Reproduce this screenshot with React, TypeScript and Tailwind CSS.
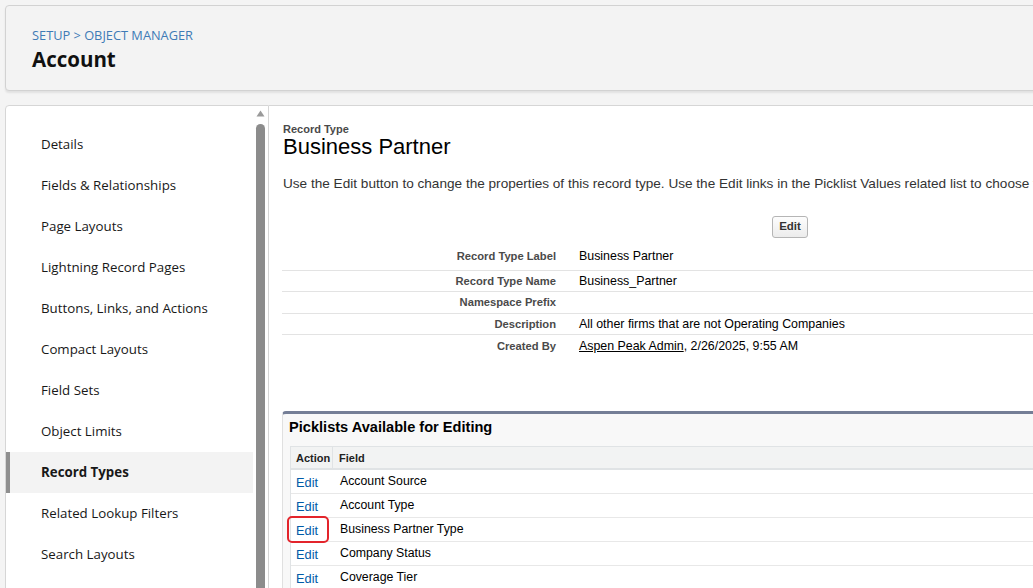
import React from "react";

const navItems = [
  "Details",
  "Fields & Relationships",
  "Page Layouts",
  "Lightning Record Pages",
  "Buttons, Links, and Actions",
  "Compact Layouts",
  "Field Sets",
  "Object Limits",
  "Record Types",
  "Related Lookup Filters",
  "Search Layouts",
  "List View Button Layout",
];

const details: { label: string; value: React.ReactNode; h: string }[] = [
  { label: "Record Type Label", value: "Business Partner", h: "h-[25px] pb-[4px]" },
  { label: "Record Type Name", value: "Business_Partner", h: "h-[21px]" },
  { label: "Namespace Prefix", value: "", h: "h-[22px]" },
  { label: "Description", value: "All other firms that are not Operating Companies", h: "h-[21px]" },
  {
    label: "Created By",
    value: (
      <>
        <span className="underline">Aspen Peak Admin</span>, 2/26/2025, 9:55 AM
      </>
    ),
    h: "h-[22px]",
  },
];

const picklists = ["Account Source", "Account Type", "Business Partner Type", "Company Status", "Coverage Tier"];

export default function App() {
  return (
    <div className="w-[1033px] h-[588px] overflow-hidden bg-[#f4f4f4] pt-[5px] pl-[5px]">
      {/* Header */}
      <div
        className="w-[1100px] h-[86px] bg-[#f3f3f3] border border-[#d2d2d2] rounded-[4px] shadow-[0_2px_2px_rgba(0,0,0,0.08)] pl-[26px] pt-[20px]"
        style={{ fontFamily: '"Open Sans", "Noto Sans", sans-serif' }}
      >
        <div className="text-[12.8px] leading-[18px] text-[#3e7bb6]">SETUP &gt; OBJECT MANAGER</div>
        <div className="mt-[1px] text-[20.5px] leading-[28px] font-bold text-[#101010]">Account</div>
      </div>

      {/* Body */}
      <div className="mt-[14px] flex h-[600px] w-[1100px]">
        {/* Left nav panel */}
        <div className="w-[264px] shrink-0 bg-white border border-[#d6d6d6] rounded-tl-[4px] flex">
          <div
            className="w-[247px] pt-[18px]"
            style={{ fontFamily: '"Open Sans", "Noto Sans", sans-serif' }}
          >
            {navItems.map((item) => {
              const sel = item === "Record Types";
              return (
                <div
                  key={item}
                  className={
                    sel
                      ? "h-[41px] flex items-center bg-[#f3f3f3] border-l-[4px] border-[#8f8f8f] pl-[31px] text-[13.3px] font-bold text-[#181818]"
                      : "h-[41px] flex items-center pl-[35px] text-[13.3px] text-[#181818]"
                  }
                >
                  {item}
                </div>
              );
            })}
          </div>
          <div className="ml-[3px] w-[9px] flex flex-col items-center">
            <svg width="9" height="7" viewBox="0 0 9 7" className="mt-[4px]">
              <path d="M4.5 0.5 L8.5 6.5 L0.5 6.5 Z" fill="#9a9a9a" />
            </svg>
            <div className="mt-[7px] w-[9px] flex-1 bg-[#8c8c8c] rounded-t-full" />
          </div>
        </div>

        {/* Right content */}
        <div
          className="flex-1 min-w-0 bg-white border-t border-[#d6d6d6] pl-[13px]"
          style={{ fontFamily: '"Liberation Sans", Arial, sans-serif' }}
        >
          <div className="pl-[1px] pt-[17px] text-[11px] leading-[12px] font-bold text-[#4a4a4a]">Record Type</div>
          <div className="pl-[1px] text-[22px] leading-[24px] text-black">Business Partner</div>
          <div className="pl-[1px] mt-[16px] text-[13.6px] leading-[18px] text-[#333] whitespace-nowrap">
            Use the Edit button to change the properties of this record type. Use the Edit links in the Picklist Values related list to choose the values available for this record type.
          </div>
          <div className="mt-[23px] pl-[490px] h-[21px]">
            <button className="h-[22px] w-[36px] text-[11.5px] font-bold text-[#333] bg-gradient-to-b from-[#fdfdfd] to-[#ececec] border border-[#b5b5b5] rounded-[3px] flex items-center justify-center">
              Edit
            </button>
          </div>

          <div className="mt-[9px]">
            {details.map((d, i) => (
              <div
                key={d.label}
                className={`flex items-center ${d.h} ${i < details.length - 1 ? "border-b border-[#e3e3e3]" : ""}`}
              >
                <div className="w-[274px] shrink-0 text-right text-[11.2px] font-bold text-[#4a4a4a] whitespace-nowrap">
                  {d.label}
                </div>
                <div className="pl-[23px] text-[12.4px] text-black whitespace-nowrap">{d.value}</div>
              </div>
            ))}
          </div>

          {/* Picklists */}
          <div className="mt-[54px] border-t-[3px] border-l border-t-[#747e96] border-l-[#e0e0e0] rounded-tl-[4px] bg-[#f8f8f8]">
            <div className="pl-[6px] pt-[3px] pb-[9px] text-[14.6px] leading-[20px] font-bold text-black">
              Picklists Available for Editing
            </div>
            <div className="ml-[7px] border-l border-t border-[#e0e3e5] bg-white">
              <div className="flex h-[23px] bg-[#f2f3f3] border-b-2 border-[#e0e3e5] text-[11px] font-bold text-[#222]">
                <div className="w-[42px] shrink-0 pl-[5px] pt-[2px] flex items-center border-r border-[#e0e3e5]">Action</div>
                <div className="pl-[6px] pt-[2px] flex items-center">Field</div>
              </div>
              {picklists.map((p, i) => (
                <div key={p} className="flex h-[24px] border-b border-[#e8e8e8]">
                  <div className="relative w-[43px] shrink-0 pl-[5px] flex items-center pt-[2px] text-[12.8px] text-[#015ba7]">
                    Edit
                    {i === 2 && (
                      <span className="absolute left-[-4px] right-[5px] top-[-2px] bottom-[-2px] border-2 border-[#e3242b] rounded-[5px]" />
                    )}
                  </div>
                  <div className="pl-[6px] flex items-center text-[12.3px] text-black">{p}</div>
                </div>
              ))}
            </div>
          </div>
        </div>
      </div>
    </div>
  );
}
